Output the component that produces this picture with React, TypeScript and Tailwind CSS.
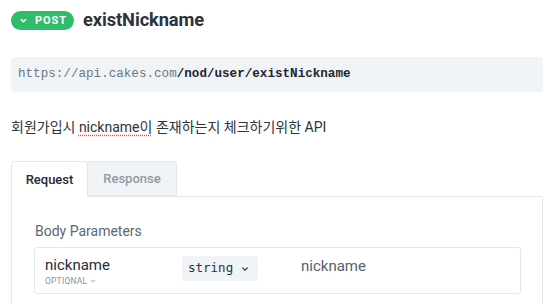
import React from "react";

export default function App() {
  return (
    <div className="w-[545px] h-[304px] overflow-hidden bg-white pl-[11px] pr-[2px] font-['Roboto',sans-serif]">
      <div className="flex items-center h-[39px] pt-[1px]">
        <div className="flex items-center h-[19px] w-[63px] rounded-full bg-[#2ebd6b] pl-[8px] text-white">
          <svg width="9" height="9" viewBox="0 0 10 10" fill="none" stroke="white" strokeWidth="1.6" strokeLinecap="round" strokeLinejoin="round">
            <path d="M2.5 3.8 L5 6.3 L7.5 3.8" />
          </svg>
          <span className="ml-[7px] text-[11px] font-bold tracking-[0.9px] leading-none">POST</span>
        </div>
        <span className="ml-[9px] text-[18.3px] font-bold text-[#2c333c] leading-none tracking-[-0.1px]">existNickname</span>
      </div>
      <div className="mt-[18px] h-[35px] rounded-[4px] bg-[#f1f4f7] flex items-center pl-[7px] font-['Liberation_Mono',monospace] text-[12.6px]">
        <span className="text-[#6d7682]">https://api.cakes.com</span>
        <span className="font-bold text-[#1f262e]">/nod/user/existNickname</span>
      </div>
      <div className="mt-[25px] text-[14px] text-[#2c333c] leading-[20px] font-['Roboto','Noto_Sans_CJK_KR',sans-serif]">
        회원가입시{" "}
        <span className="underline decoration-dotted decoration-[#e0464e] underline-offset-[3px]">nickname이</span>{" "}
        존재하는지 체크하기위한 API
      </div>
      <div className="mt-[24px] flex">
        <div className="w-[77px] h-[36px] border border-b-0 border-[#e3e8ed] rounded-t-[3px] bg-white flex items-center justify-center text-[13px] font-medium text-[#262c33] relative z-10 -mb-px">
          Request
        </div>
        <div className="w-[89px] h-[35px] border border-l-0 border-[#e3e8ed] rounded-tr-[3px] bg-[#f1f4f7] flex items-center justify-center text-[13px] font-medium text-[#8f99a4]">
          Response
        </div>
      </div>
      <div className="border border-[#e3e8ed] rounded-tr-[3px] h-[120px] pl-[22px] pr-[21px]">
        <div className="mt-[25px] text-[14px] text-[#5e6772] leading-[18px] pl-[1px]">Body Parameters</div>
        <div className="mt-[7px] h-[47px] border border-[#e3e8ed] rounded-[3px] flex items-start pl-[10px]">
          <div className="w-[137px] pt-[8px]">
            <div className="text-[15px] leading-[18px] text-[#262c33]">nickname</div>
            <div className="flex items-center text-[8.5px] text-[#8a939e] tracking-[0.2px] leading-[12px] mt-[1px]">
              OPTIONAL
              <svg className="ml-[3px]" width="6" height="6" viewBox="0 0 10 10" fill="none" stroke="#8a939e" strokeWidth="1.5" strokeLinecap="round">
                <path d="M2 3.5 L5 6.5 L8 3.5" />
              </svg>
            </div>
          </div>
          <div className="mt-[8px] h-[25px] w-[76px] rounded-[3px] bg-[#f1f4f7] flex items-center pl-[6px] font-['DejaVu_Sans_Mono',monospace] text-[12.5px] text-[#2c333c]">
            string
            <svg className="ml-[8px]" width="8" height="8" viewBox="0 0 10 10" fill="none" stroke="#2c333c" strokeWidth="1.4" strokeLinecap="round">
              <path d="M2 3.5 L5 6.5 L8 3.5" />
            </svg>
          </div>
          <div className="ml-[43px] pt-[9px] text-[15px] leading-[18px] text-[#58616b]">nickname</div>
        </div>
      </div>
    </div>
  );
}
